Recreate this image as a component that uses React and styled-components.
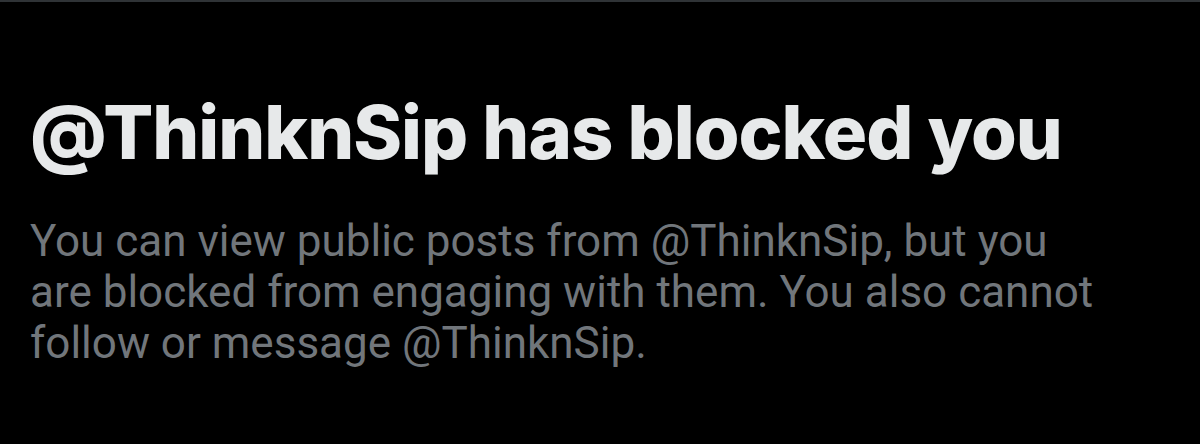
import React from "react";
import styled, { createGlobalStyle } from "styled-components";

const GlobalStyle = createGlobalStyle`
  html, body {
    margin: 0;
    padding: 0;
    background: #000;
  }
`;

const Page = styled.div`
  width: 1200px;
  height: 444px;
  box-sizing: border-box;
  background: #000;
  border-top: 2px solid #2f3336;
  padding: 90px 30px 0 30px;
`;

const Title = styled.h1`
  margin: 0;
  color: #e7e9ea;
  font-family: Inter, "Noto Sans", sans-serif;
  font-size: 74px;
  font-weight: 800;
  line-height: 80px;
  letter-spacing: -1px;
`;

const Message = styled.p`
  margin: 44px 0 0 0;
  color: #71767b;
  font-family: Roboto, "Noto Sans", sans-serif;
  font-size: 44px;
  font-weight: 400;
  line-height: 51px;
`;

export default function App() {
  return (
    <>
      <GlobalStyle />
      <Page>
        <Title>@ThinknSip has blocked you</Title>
        <Message>
          You can view public posts from @ThinknSip, but you
          <br />
          are blocked from engaging with them. You also cannot
          <br />
          follow or message @ThinknSip.
        </Message>
      </Page>
    </>
  );
}
